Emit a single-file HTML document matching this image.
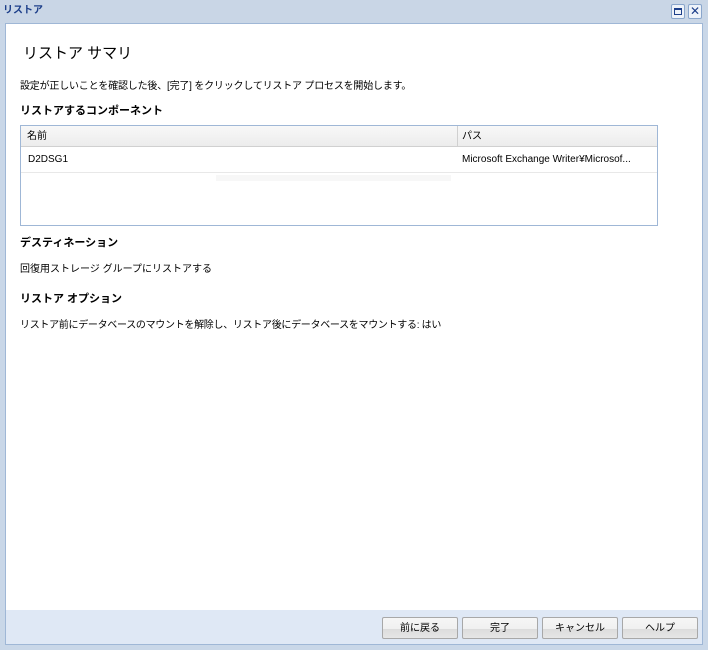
<!DOCTYPE html>
<html><head><meta charset="utf-8"><style>
*{margin:0;padding:0;box-sizing:border-box}
body{width:708px;height:650px;background:#c9d7e8;font-family:"Liberation Sans","Noto Sans CJK JP",sans-serif;font-size:10px;color:#000;position:relative;overflow:hidden}
.t{position:absolute;white-space:nowrap;line-height:12px}
#bar{position:absolute;left:0;top:0;width:708px;height:24px;background:#c9d6e6}
#main{position:absolute;left:5px;top:23px;width:698px;height:587px;background:#fff;border:1px solid #9fb7d6;border-bottom:none}
#foot{position:absolute;left:5px;top:610px;width:698px;height:35px;background:#dfe8f5;border:1px solid #9fb7d6;border-top:none}
.btn{position:absolute;top:617px;width:76px;height:22px;border:1px solid #a8a8a8;border-radius:2px;background:linear-gradient(#f6f6f6 0,#f0f0f0 55%,#dcdcdc 56%,#e6e6e6);text-align:center;line-height:21px;font-size:10px}
.ic{position:absolute;top:4px;width:14px;height:15px;border:1px solid #8aa6cc;background:#eef3fa;border-radius:2px}
b{font-weight:bold}
</style></head><body>
<div id="bar"></div>
<div class="t" style="left:3px;top:5px;color:#1d3f8a;font-weight:bold;font-size:10px">リストア</div>
<div class="ic" style="left:671px"><div style="position:absolute;left:2px;top:3px;width:8px;height:7px;border:1px solid #1d3f8a;border-top-width:2px"></div></div>
<div class="ic" style="left:688px;color:#1d3f8a;font-size:12px;line-height:13px;text-align:center">✕</div>
<div id="main"></div>
<div id="foot"></div>
<div class="t" style="left:23px;top:45px;font-size:15px;line-height:18px">リストア サマリ</div>
<div class="t" style="left:20px;top:81px;letter-spacing:-0.2px">設定が正しいことを確認した後、[完了] をクリックしてリストア プロセスを開始します。</div>
<div class="t" style="left:20px;top:105px;font-size:11px;line-height:13px"><b>リストアするコンポーネント</b></div>
<div style="position:absolute;left:20px;top:125px;width:638px;height:101px;border:1px solid #9fb7d6;background:#fff">
 <div style="position:absolute;left:0;top:0;width:636px;height:21px;background:linear-gradient(#f8f8f8,#ececec);border-bottom:1px solid #d0d0d0"></div>
 <div style="position:absolute;left:436px;top:0;width:1px;height:21px;background:#d0d0d0"></div>
 <div class="t" style="left:6px;top:5px;font-size:10px">名前</div>
 <div class="t" style="left:441px;top:5px;font-size:10px">パス</div>
 <div style="position:absolute;left:0;top:46px;width:636px;height:1px;background:#e8e8e8"></div>
 <div class="t" style="left:7px;top:28px">D2DSG1</div>
 <div class="t" style="left:441px;top:28px">Microsoft Exchange Writer¥Microsof...</div>
 <div style="position:absolute;left:195px;top:49px;width:235px;height:6px;background:#f7f7f7"></div>
</div>
<div class="t" style="left:20px;top:237px;font-size:11px;line-height:13px"><b>デスティネーション</b></div>
<div class="t" style="left:20px;top:264px">回復用ストレージ グループにリストアする</div>
<div class="t" style="left:20px;top:293px;font-size:11px;line-height:13px"><b>リストア オプション</b></div>
<div class="t" style="left:20px;top:320px;letter-spacing:-0.3px">リストア前にデータベースのマウントを解除し、リストア後にデータベースをマウントする: はい</div>
<div class="btn" style="left:382px">前に戻る</div>
<div class="btn" style="left:462px">完了</div>
<div class="btn" style="left:542px">キャンセル</div>
<div class="btn" style="left:622px">ヘルプ</div>
</body></html>
